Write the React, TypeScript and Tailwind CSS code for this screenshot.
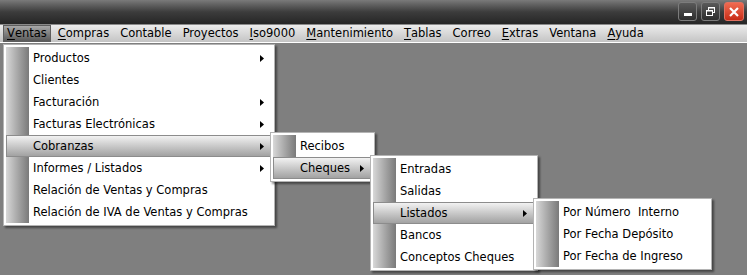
import React from "react";

type Item = { label: string; arrow?: boolean; active?: boolean };

const menuBar = [
  { label: "Ventas", u: 0 },
  { label: "Compras", u: 0 },
  { label: "Contable", u: -1 },
  { label: "Proyectos", u: -1 },
  { label: "Iso9000", u: 0 },
  { label: "Mantenimiento", u: 0 },
  { label: "Tablas", u: 0 },
  { label: "Correo", u: -1 },
  { label: "Extras", u: 0 },
  { label: "Ventana", u: -1 },
  { label: "Ayuda", u: 0 },
];

const ventas: Item[] = [
  { label: "Productos", arrow: true },
  { label: "Clientes" },
  { label: "Facturación", arrow: true },
  { label: "Facturas Electrónicas", arrow: true },
  { label: "Cobranzas", arrow: true, active: true },
  { label: "Informes / Listados", arrow: true },
  { label: "Relación de Ventas y Compras" },
  { label: "Relación de IVA de Ventas y Compras" },
];

const cobranzas: Item[] = [
  { label: "Recibos" },
  { label: "Cheques", arrow: true, active: true },
];

const cheques: Item[] = [
  { label: "Entradas" },
  { label: "Salidas" },
  { label: "Listados", arrow: true, active: true },
  { label: "Bancos" },
  { label: "Conceptos Cheques" },
];

const listados: Item[] = [
  { label: "Por Número  Interno" },
  { label: "Por Fecha Depósito" },
  { label: "Por Fecha de Ingreso" },
];

function Arrow() {
  return (
    <svg width="4" height="7" viewBox="0 0 4 7" className="shrink-0">
      <path d="M0 0 L4 3.5 L0 7 Z" fill="#000" />
    </svg>
  );
}

function Menu({ items, className }: { items: Item[]; className: string }) {
  return (
    <div
      className={`absolute border border-[#b4b4b4] bg-white p-[2px] shadow-[2px_2px_2px_rgba(0,0,0,0.45)] ${className}`}
    >
      <div className="relative">
        {/* icon strip */}
        <div className="absolute left-0 top-0 bottom-0 w-[23px] bg-gradient-to-r from-[#d8d8d8] to-[#7a7a7a]" />
        {items.map((it) => (
          <div
            key={it.label}
            className={`relative flex h-[22px] items-center pr-[7px] pt-[1px] ${
              it.active
                ? "border border-[#8c8c8c] bg-gradient-to-b from-[#f2f2f2] to-[#a2a2a2]"
                : "border border-transparent"
            }`}
          >
            <span className="flex-1 whitespace-pre pl-[26px]">{it.label}</span>
            {it.arrow && <Arrow />}
          </div>
        ))}
      </div>
    </div>
  );
}

export default function App() {
  return (
    <div
      className="relative h-[275px] w-[747px] overflow-hidden bg-[#7f7f7f] text-[11.5px] text-black"
      style={{ fontFamily: '"DejaVu Sans", Verdana, sans-serif' }}
    >
      {/* Title bar */}
      <div className="flex h-[24px] items-start justify-end gap-[4px] bg-gradient-to-b from-[#7a7a7a] via-[#3c3c3c] to-[#262626] pr-[3px] pt-[2px]">
        <div className="flex h-[19px] w-[19px] items-end justify-center rounded-[3px] border border-[#7c7c7c] bg-gradient-to-b from-[#5a5a5a] to-[#2e2e2e] pb-[4px]">
          <div className="h-[3px] w-[8px] bg-white" />
        </div>
        <div className="flex h-[19px] w-[19px] items-center justify-center rounded-[3px] border border-[#7c7c7c] bg-gradient-to-b from-[#5a5a5a] to-[#2e2e2e]">
          <svg width="11" height="11" viewBox="0 0 11 11">
            <rect x="3.5" y="1.5" width="6" height="5" fill="none" stroke="#fff" strokeWidth="1" />
            <rect x="3.5" y="1.5" width="6" height="1" fill="#fff" />
            <rect x="1.5" y="4.5" width="6" height="5" fill="#3a3a3a" stroke="#fff" strokeWidth="1" />
            <rect x="1.5" y="4.5" width="6" height="1" fill="#fff" />
          </svg>
        </div>
        <div className="flex h-[19px] w-[20px] items-center justify-center rounded-[3px] border border-[#e07060] bg-gradient-to-b from-[#f06a50] to-[#c82a14]">
          <svg width="12" height="12" viewBox="0 0 12 12">
            <path d="M2 2 L10 10 M10 2 L2 10" stroke="#fff" strokeWidth="2.2" />
          </svg>
        </div>
      </div>
      <div className="h-[1px] bg-[#8a8a8a]" />

      {/* Menu bar */}
      <div className="flex h-[18px] items-center gap-[3px] border-b border-white bg-gradient-to-b from-[#ececec] to-[#c4c4c4] pl-[3px] text-[11.5px]">
        {menuBar.map((m, i) => (
          <div
            key={m.label}
            className={`flex h-[17px] items-center px-[3px] pt-[1px] ${
              i === 0
                ? "border border-[#5e5e5e] bg-gradient-to-b from-[#a8a8a8] to-[#5a5a5a]"
                : "border border-transparent"
            }`}
          >
            {m.u === 0 ? (
              <>
                <span className="underline underline-offset-2">{m.label[0]}</span>
                {m.label.slice(1)}
              </>
            ) : (
              m.label
            )}
          </div>
        ))}
      </div>

      <Menu items={ventas} className="left-[3px] top-[44px] w-[272px]" />
      <Menu items={cobranzas} className="left-[270px] top-[132px] w-[105px]" />
      <Menu items={cheques} className="left-[370px] top-[155px] w-[168px]" />
      <Menu items={listados} className="left-[533px] top-[198px] w-[179px]" />
    </div>
  );
}
